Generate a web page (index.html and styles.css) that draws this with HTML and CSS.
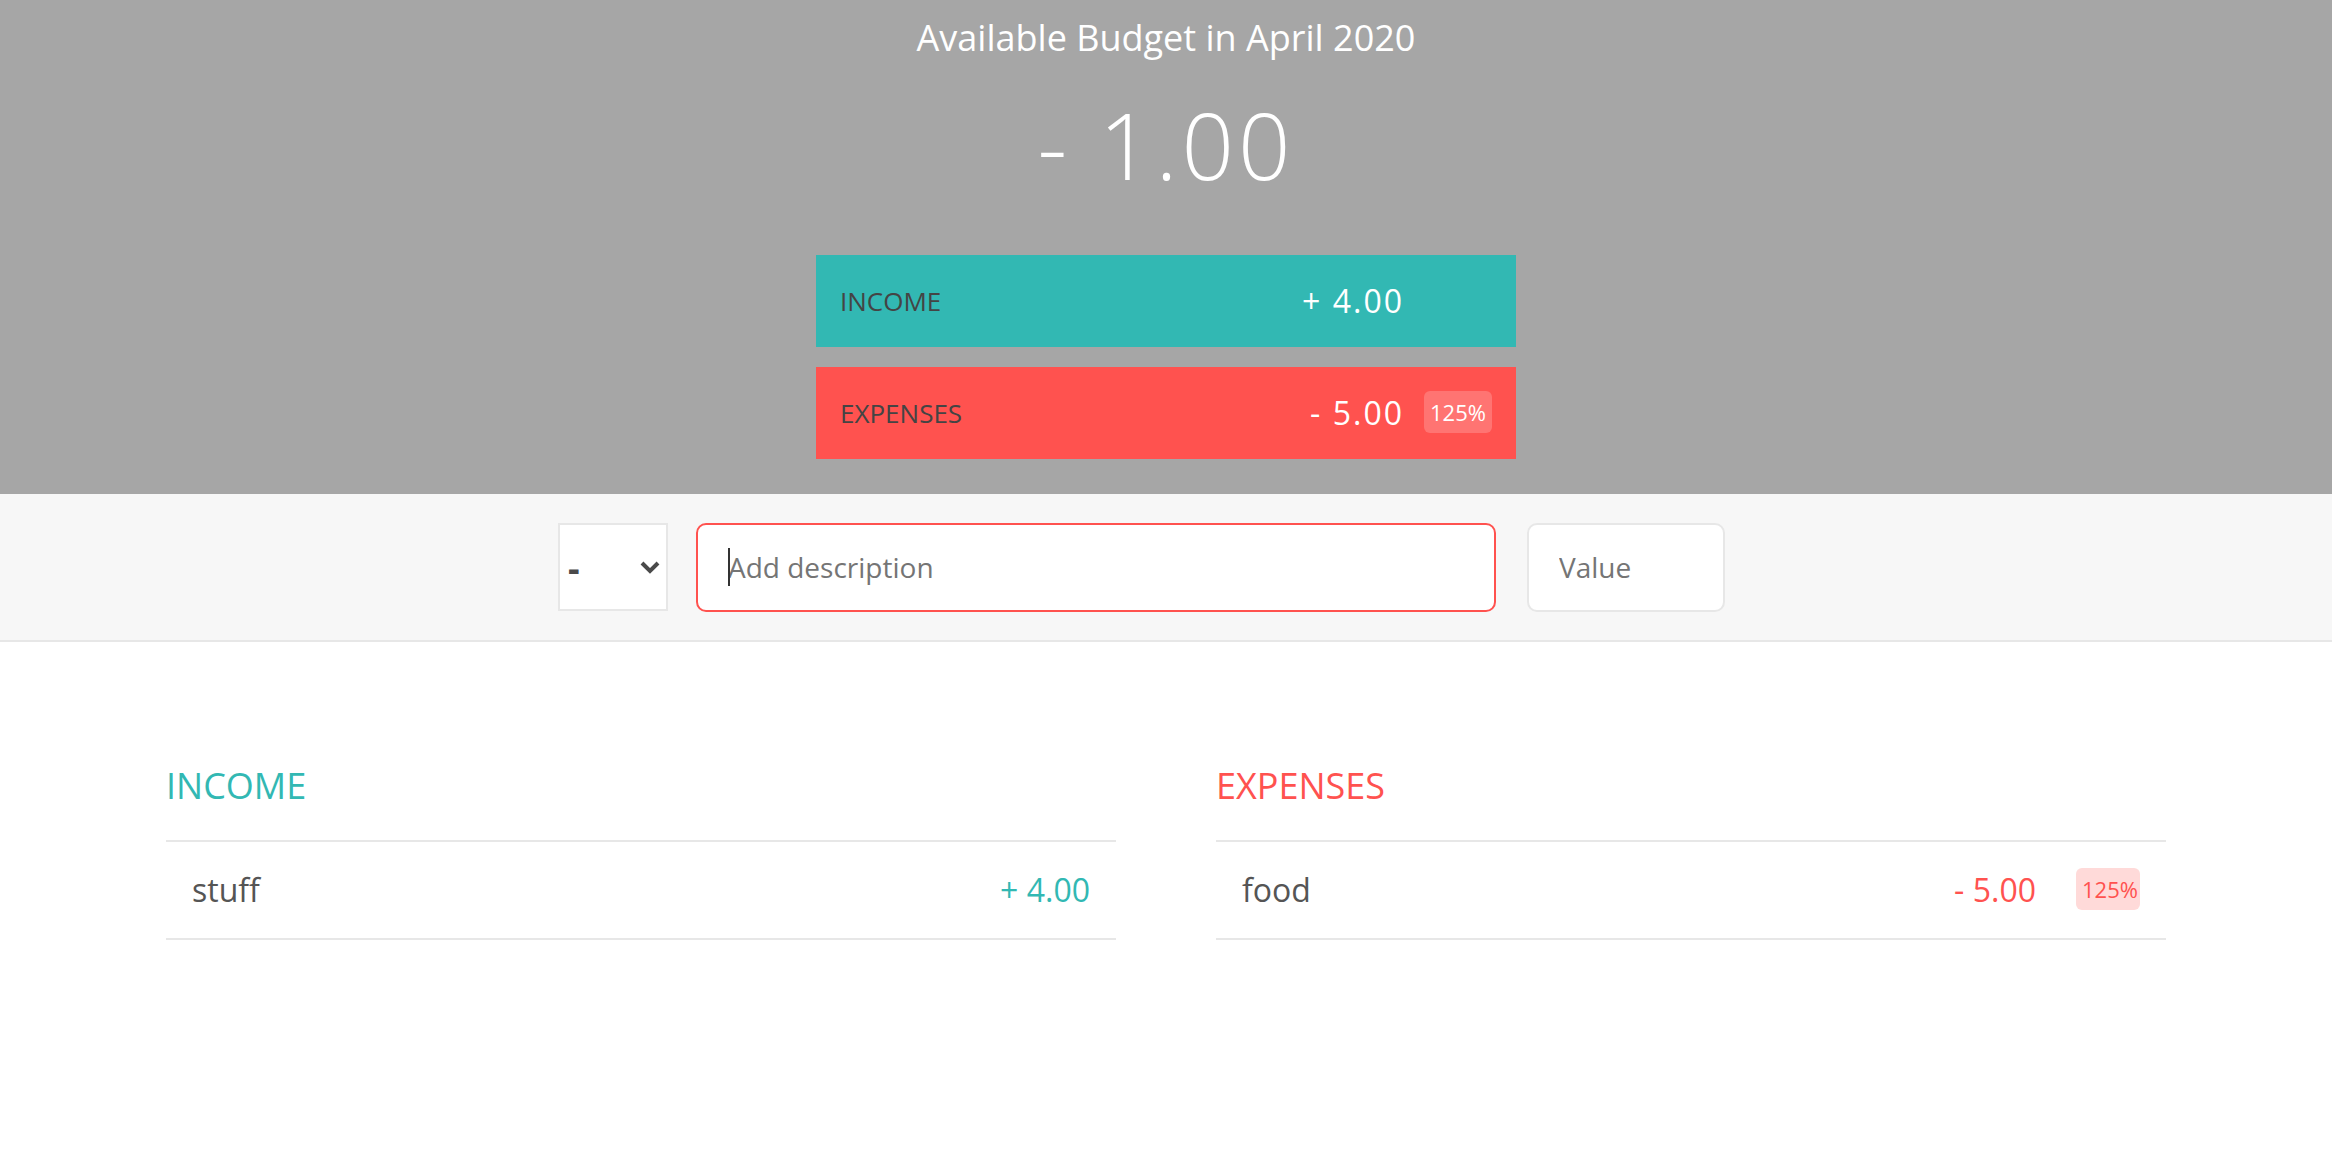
FILE: index.html
```html
<!DOCTYPE html>
<html lang="en">
<head>
<meta charset="utf-8">
<title>Budgety</title>
<link rel="stylesheet" href="styles.css">
</head>
<body>
<div class="top">
  <div class="budget">
    <div class="budget__title">Available Budget in <span class="budget__title--month">April 2020</span></div>
    <div class="budget__value">- 1.00</div>
    <div class="budget__income">
      <div class="budget__income--text">Income</div>
      <div class="right">
        <div class="budget__income--value">+ 4.00</div>
        <div class="budget__income--percentage">&nbsp;</div>
      </div>
    </div>
    <div class="budget__expenses">
      <div class="budget__expenses--text">Expenses</div>
      <div class="right">
        <div class="budget__expenses--value">- 5.00</div>
        <div class="budget__expenses--percentage">125%</div>
      </div>
    </div>
  </div>
</div>

<div class="add">
  <div class="add__container">
    <span class="select-wrap">
      <select class="add__type">
        <option value="inc">+</option>
        <option value="exp" selected>-</option>
      </select>
      <svg class="select-chevron" width="20" height="13" viewBox="0 0 20 13"><path d="M2 2 L10 10 L18 2" fill="none" stroke="#4a4a4a" stroke-width="4"/></svg>
    </span>
    <span class="desc-wrap">
      <input type="text" class="add__description red-focus" placeholder="Add description">
      <span class="caret"></span>
    </span>
    <input type="number" class="add__value" placeholder="Value">
  </div>
</div>

<div class="container">
  <div class="income">
    <h2 class="income__title">Income</h2>
    <div class="income__list">
      <div class="item">
        <div class="item__description">stuff</div>
        <div class="right">
          <div class="item__value">+ 4.00</div>
        </div>
      </div>
    </div>
  </div>
  <div class="expenses">
    <h2 class="expenses__title">Expenses</h2>
    <div class="expenses__list">
      <div class="item">
        <div class="item__description">food</div>
        <div class="right">
          <div class="item__value">- 5.00</div>
          <div class="item__percentage">125%</div>
        </div>
      </div>
    </div>
  </div>
</div>
</body>
</html>
```

FILE: styles.css
```css
* {
  margin: 0;
  padding: 0;
  box-sizing: border-box;
}

body {
  color: #555;
  font-family: "Open Sans", "Liberation Sans", sans-serif;
  font-size: 32px;
  font-weight: 400;
  background: #fff;
}

.top {
  height: 494px;
  background-color: #a6a6a6;
  padding-top: 13px;
}

.budget {
  width: 700px;
  margin: 0 auto;
  color: #fff;
}

.budget__title {
  font-size: 36px;
  text-align: center;
  margin-bottom: 20px;
  font-weight: 400;
  line-height: 49px;
}

.budget__value {
  font-weight: 300;
  font-size: 92px;
  line-height: 125px;
  text-align: center;
  margin-bottom: 48px;
  letter-spacing: 4px;
}

.budget__income,
.budget__expenses {
  display: flex;
  justify-content: space-between;
  align-items: flex-start;
  padding: 24px;
  height: 92px;
  text-transform: uppercase;
}

.budget__income {
  margin-bottom: 20px;
  background-color: #32b8b3;
}

.budget__expenses {
  background-color: #ff524f;
}

.budget__income--text,
.budget__expenses--text {
  font-size: 26px;
  color: #444;
  margin-top: 4px;
  line-height: 36px;
}

.right {
  display: flex;
  align-items: flex-start;
}

.budget__income--value,
.budget__expenses--value {
  letter-spacing: 2px;
  line-height: 44px;
}

.budget__income--percentage,
.budget__expenses--percentage {
  width: 68px;
  font-size: 22px;
  line-height: 30px;
  padding: 6px 0;
  margin-left: 20px;
  text-align: center;
}

.budget__expenses--percentage {
  background-color: rgba(255, 255, 255, 0.2);
  border-radius: 6px;
}

.add {
  height: 148px;
  background-color: #f7f7f7;
  border-bottom: 2px solid #e7e7e7;
  display: flex;
  align-items: center;
}

.add__container {
  flex: 1;
  display: flex;
  align-items: center;
  justify-content: center;
  padding-right: 49px;
}

.select-wrap {
  position: relative;
  display: block;
  margin-right: 28px;
}

.add__type {
  display: block;
  width: 110px;
  height: 88px;
  border: 2px solid #e7e7e7;
  font-family: inherit;
  font-size: 36px;
  font-weight: 700;
  color: #4a4a4a;
  background-color: #fff;
  padding-left: 8px;
  appearance: none;
  -webkit-appearance: none;
  border-radius: 0;
  outline: none;
}

.select-chevron {
  position: absolute;
  left: 82px;
  top: 38px;
  pointer-events: none;
}

.desc-wrap {
  position: relative;
  display: block;
  margin-right: 31px;
}

.add__description,
.add__value {
  display: block;
  height: 89px;
  border: 2px solid #e7e7e7;
  background-color: #fff;
  color: #555;
  font-family: inherit;
  font-size: 28px;
  padding: 0 30px;
  border-radius: 10px;
  outline: none;
}

.add__description::placeholder,
.add__value::placeholder {
  color: #757575;
}

.add__description {
  width: 800px;
}

.red-focus {
  border-color: #ff524f;
}

.caret {
  position: absolute;
  left: 32px;
  top: 25px;
  width: 2px;
  height: 38px;
  background: #333;
}

.add__value {
  width: 198px;
  -moz-appearance: textfield;
}

.add__value::-webkit-inner-spin-button,
.add__value::-webkit-outer-spin-button {
  -webkit-appearance: none;
  margin: 0;
}

.container {
  width: 2000px;
  margin: 119px auto;
  display: flex;
  gap: 100px;
}

.income,
.expenses {
  width: 950px;
}

h2 {
  text-transform: uppercase;
  font-size: 36px;
  font-weight: 400;
  line-height: 49px;
  margin-bottom: 30px;
}

.income__title {
  color: #32b8b3;
}

.expenses__title {
  color: #ff524f;
}

.item {
  display: flex;
  justify-content: space-between;
  align-items: flex-start;
  padding: 26px;
  border-bottom: 2px solid #e7e7e7;
  line-height: 44px;
}

.item:first-child {
  border-top: 2px solid #e7e7e7;
}

.income .item__value {
  color: #32b8b3;
}

.expenses .item__value,
.expenses .item__percentage {
  color: #ff524f;
}

.item__percentage {
  margin-left: 40px;
  font-size: 22px;
  line-height: 30px;
  background-color: #ffdad9;
  padding: 6px;
  border-radius: 6px;
  width: 64px;
  text-align: center;
}
```
